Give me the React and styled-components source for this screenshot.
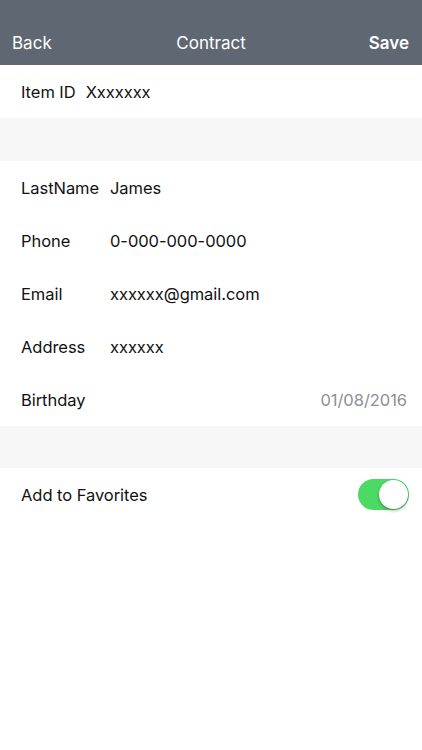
import styled, { createGlobalStyle } from "styled-components"

const GlobalStyle = createGlobalStyle`
    html, body {
        margin: 0;
        padding: 0;
        background: #ffffff;
        font-family: Inter, "Liberation Sans", Arial, sans-serif;
    }
`

const Screen = styled.div`
    width: 422px;
    min-height: 750px;
    background: #ffffff;
    display: flex;
    flex-direction: column;
`

const NavBar = styled.div`
    height: 65px;
    background: #5e6772;
    display: flex;
    align-items: flex-end;
    justify-content: space-between;
    padding: 0 13px 12px 12px;
    box-sizing: border-box;
    color: #ffffff;
    font-size: 17px;
    position: relative;
`

const NavButton = styled.span`
    font-weight: ${props => (props.$bold ? 600 : 400)};
    line-height: 20px;
`

const NavTitle = styled.span`
    position: absolute;
    left: 0;
    right: 0;
    bottom: 12px;
    text-align: center;
    line-height: 20px;
    pointer-events: none;
`

const Section = styled.div`
    background: #ffffff;
    display: flex;
    flex-direction: column;
`

const Spacer = styled.div`
    height: ${props => props.$h}px;
    background: #f7f7f7;
`

const Row = styled.div`
    height: 53px;
    display: flex;
    align-items: center;
    padding: 0 14px 0 21px;
    font-size: 16.5px;
    letter-spacing: -0.05px;
    color: #111111;
`

const Label = styled.span`
    width: ${props => (props.$w ? `${props.$w}px` : "auto")};
    margin-right: ${props => (props.$gap ? `${props.$gap}px` : 0)};
    flex-shrink: 0;
`

const Value = styled.span`
    flex: 1;
    text-align: ${props => (props.$right ? "right" : "left")};
    color: ${props => (props.$muted ? "#8e8e93" : "#111111")};
    padding-right: ${props => (props.$right ? "1px" : 0)};
`

const Toggle = styled.div`
    width: 51px;
    height: 31px;
    border-radius: 16px;
    background: #4cd964;
    position: relative;
    margin-left: auto;
    margin-right: -1px;
`

const Knob = styled.div`
    position: absolute;
    top: 1px;
    right: 1px;
    width: 29px;
    height: 29px;
    border-radius: 50%;
    background: #ffffff;
    box-shadow: 0 2px 3px rgba(0, 0, 0, 0.25), 0 0 0 0.5px rgba(0, 0, 0, 0.08);
`

const contact = [
    { label: "LastName", value: "James" },
    { label: "Phone", value: "0-000-000-0000" },
    { label: "Email", value: "xxxxxx@gmail.com" },
    { label: "Address", value: "xxxxxx" },
]

const App = () => {
    return (
        <Screen>
            <GlobalStyle />
            <NavBar>
                <NavButton>Back</NavButton>
                <NavTitle>Contract</NavTitle>
                <NavButton $bold>Save</NavButton>
            </NavBar>
            <Section>
                <Row>
                    <Label $gap={10}>Item ID</Label>
                    <Value>Xxxxxxx</Value>
                </Row>
            </Section>
            <Spacer $h={43} />
            <Section>
                {contact.map(item => (
                    <Row key={item.label}>
                        <Label $w={89}>{item.label}</Label>
                        <Value>{item.value}</Value>
                    </Row>
                ))}
                <Row>
                    <Label>Birthday</Label>
                    <Value $right $muted>01/08/2016</Value>
                </Row>
            </Section>
            <Spacer $h={42} />
            <Section>
                <Row>
                    <Label>Add to Favorites</Label>
                    <Toggle>
                        <Knob />
                    </Toggle>
                </Row>
            </Section>
        </Screen>
    )
}

export default App
